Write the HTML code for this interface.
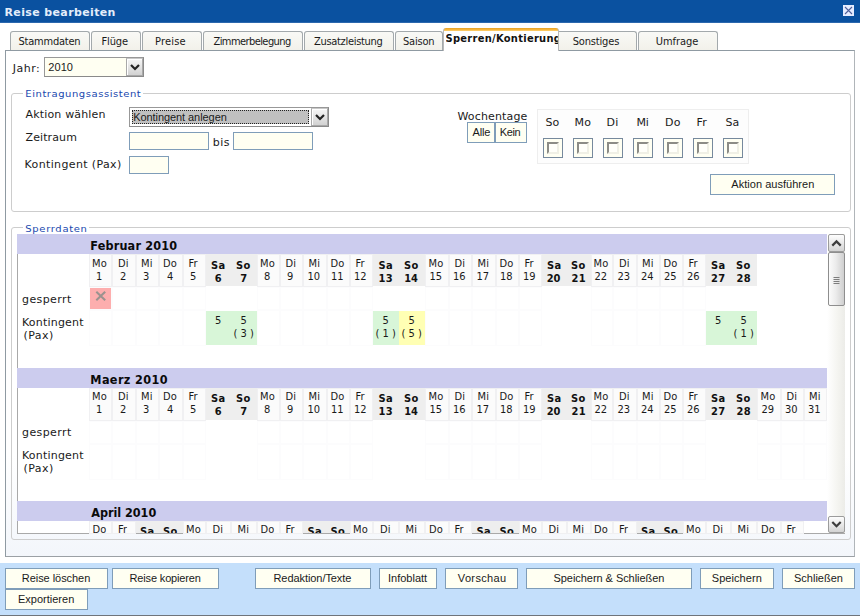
<!DOCTYPE html>
<html lang="de">
<head>
<meta charset="utf-8">
<title>Reise bearbeiten</title>
<style>
*{box-sizing:border-box;margin:0;padding:0}
html,body{width:860px;height:616px;overflow:hidden;background:#fff}
body{position:relative;font-family:"DejaVu Sans","Liberation Sans",sans-serif;font-size:11px;color:#1a1a1a}
.abs{position:absolute;white-space:nowrap}
.t{position:absolute;white-space:nowrap;line-height:13px;color:#1a1a1a}
.vd{font-family:"DejaVu Sans","Liberation Sans",sans-serif;font-size:11px}
.vs{font-family:"DejaVu Sans","Liberation Sans",sans-serif;font-size:10px;color:#2048ae;transform:scaleY(.9);transform-origin:0 9.4px}
.th{font-family:"DejaVu Sans Condensed","Liberation Sans",sans-serif;font-size:11px}
.ar{font-family:"Liberation Sans",sans-serif;font-size:11px}
.tt{font-family:"DejaVu Sans","Liberation Sans",sans-serif;font-size:11px;font-weight:bold;color:#e4edfa}
.mt{font-family:"DejaVu Sans Condensed","Liberation Sans",sans-serif;font-size:12.5px;font-weight:bold;color:#0a0a0a}
.tb{font-family:"DejaVu Sans Condensed","Liberation Sans",sans-serif;font-size:11px;font-weight:bold;color:#111}
#title{left:0;top:0;width:860px;height:23px;background:#0a51a0;border-bottom:1px solid #2b68ae}
#panel{left:5px;top:50px;width:850px;height:507px;border:1px solid #8f9aa2;border-right-color:#b0b5b9;border-bottom-color:#9ba0a5;background:linear-gradient(#fff 0,#fff 80%,#f3f6fb 100%)}
.tab{position:absolute;top:31px;height:19px;border:1px solid #a3a9ac;border-bottom:none;border-radius:3px 3px 0 0;background:linear-gradient(#f9f9f6,#f2f1ea)}
.tab.act{top:28px;height:23px;border:1px solid #b9b9b9;border-top:none;border-bottom:none;background:linear-gradient(#e8a123 0,#f6b53a 1.5px,#fdd173 3px,#fff 3px);z-index:3}
.inp{position:absolute;border:1px solid #7f9db9;background:#fffff2}
.btn{position:absolute;height:21px;border:1px solid #7f9db9;background:#fffff2}
.fs{position:absolute;border:1px solid #cdcdcd;border-radius:3px}
.lgbg{position:absolute;background:#fff;height:3px}
#bar{left:0;top:563px;width:860px;height:53px;background:#c4dffb;border-bottom:1px solid #6f747a}
.sel{position:absolute;border:1px solid #989898;border-right-color:#8a8a8a;border-bottom-color:#8a8a8a;background:#fffff2}
.sel .arr{position:absolute;right:0;top:0;bottom:0;width:17px;background:linear-gradient(#f6f6f6,#d2d2d2);border:1px solid #a9a9a9;border-top-color:#c8c8c8;box-shadow:inset 1px 1px 0 #fff}
.sel .arr svg{position:absolute;left:3px;top:5px}
.cb{position:absolute;width:20px;height:20px;border:1px solid #76899d;background:#fffff2}
.cb i{position:absolute;left:3px;top:3px;width:12px;height:12px;border:2px solid;border-color:#8c8c86 #f0f0e6 #f0f0e6 #8c8c86;background:#fffffa}
#cal{left:17px;top:234px;width:828px;height:300px;overflow:hidden;background:#fff;border-left:1px solid #a9a9a9;border-bottom:1px solid #a9a9a9}
.mh{position:absolute;left:0;width:810px;height:20px;background:#ccccee}
.dc{position:absolute;background:#fbfbfb;border:1px solid #f0f0f2}
.ec{position:absolute;border:1px solid #fcfcfd}
.dc.we{background:#eeeeee;border:none}
</style>
</head>
<body>
<div id="title" class="abs"></div>
<div class="t tt" style="left:4.5px;top:5.7px;letter-spacing:0.37px;">Reise bearbeiten</div>
<svg class="abs" style="left:843px;top:5px" width="11" height="11" viewBox="0 0 11 11"><rect width="11" height="11" fill="#e6ecff"/><path d="M2 2 L9 9 M9 2 L2 9" stroke="#50609a" stroke-width="1.1"/></svg>
<div id="panel" class="abs"></div>
<div class="tab" style="left:10px;width:80px"></div>
<div class="t th" style="left:18.5px;top:34.7px;letter-spacing:-0.22px;z-index:4">Stammdaten</div>
<div class="tab" style="left:91px;width:50px"></div>
<div class="t th" style="left:101.5px;top:34.7px;letter-spacing:-0.12px;z-index:4">Flüge</div>
<div class="tab" style="left:142px;width:60px"></div>
<div class="t th" style="left:155.0px;top:34.7px;letter-spacing:0.20px;z-index:4">Preise</div>
<div class="tab" style="left:203px;width:100px"></div>
<div class="t th" style="left:213.5px;top:34.7px;letter-spacing:-0.58px;z-index:4">Zimmerbelegung</div>
<div class="tab" style="left:304px;width:90px"></div>
<div class="t th" style="left:314.0px;top:34.7px;letter-spacing:-0.31px;z-index:4">Zusatzleistung</div>
<div class="tab" style="left:395px;width:48px"></div>
<div class="t th" style="left:403.0px;top:34.7px;letter-spacing:-0.20px;z-index:4">Saison</div>
<div class="tab act" style="left:443px;width:116px"></div>
<div class="t tb" style="left:445.5px;top:31.7px;letter-spacing:0.30px;z-index:4;overflow:hidden;width:112px">Sperren/Kontierung</div>
<div class="tab" style="left:554px;width:83px"></div>
<div class="t th" style="left:572.7px;top:34.7px;letter-spacing:-0.16px;z-index:4">Sonstiges</div>
<div class="tab" style="left:638px;width:80px"></div>
<div class="t th" style="left:655.7px;top:34.7px;letter-spacing:-0.03px;z-index:4">Umfrage</div>
<div class="t vd" style="left:12.8px;top:61.7px;letter-spacing:0.50px;">Jahr:</div>
<div class="sel" style="left:44px;top:57px;width:100px;height:20px"><div class="arr"><svg width="10" height="7" viewBox="0 0 10 7"><path d="M1 1 L5 5 L9 1" stroke="#222" stroke-width="2.2" fill="none"/></svg></div></div>
<div class="t ar" style="left:48.3px;top:60.7px;letter-spacing:0.07px;">2010</div>
<div class="fs" style="left:11px;top:93px;width:840px;height:119px"></div>
<div class="lgbg" style="left:23px;top:92px;width:120px"></div>
<div class="t vs" style="left:25.3px;top:87.4px;letter-spacing:0.55px;">Eintragungsassistent</div>
<div class="t vd" style="left:25.5px;top:107.5px;letter-spacing:0.17px;">Aktion wählen</div>
<div class="t vd" style="left:25.5px;top:131.2px;letter-spacing:0.11px;">Zeitraum</div>
<div class="t vd" style="left:24.5px;top:158.2px;letter-spacing:0.37px;">Kontingent (Pax)</div>
<div class="sel" style="left:129px;top:107px;width:200px;height:20px;background:#fff"><div class="abs" style="left:2px;top:2px;width:177px;height:14px;background:#c0c0c0;outline:1px dotted #222;outline-offset:-1px"></div><div class="arr"><svg width="10" height="7" viewBox="0 0 10 7"><path d="M1 1 L5 5 L9 1" stroke="#222" stroke-width="2.2" fill="none"/></svg></div></div>
<div class="t ar" style="left:133.2px;top:110.7px;letter-spacing:-0.07px;">Kontingent anlegen</div>
<div class="inp" style="left:129px;top:132px;width:80px;height:18px"></div>
<div class="t vd" style="left:212.8px;top:135.7px;letter-spacing:0.50px;">bis</div>
<div class="inp" style="left:233px;top:132px;width:80px;height:18px"></div>
<div class="inp" style="left:129px;top:156px;width:40px;height:18px"></div>
<div class="t vd" style="left:457.5px;top:109.7px;letter-spacing:0.14px;">Wochentage</div>
<div class="btn" style="left:467px;top:122px;width:28px;height:21px"></div>
<div class="btn" style="left:495px;top:122px;width:32px;height:21px"></div>
<div class="t ar" style="left:472.5px;top:125.5px;letter-spacing:-0.17px;">Alle</div>
<div class="t ar" style="left:499.8px;top:125.5px;letter-spacing:-0.43px;">Kein</div>
<div class="abs" style="left:537px;top:109px;width:212px;height:55px;border:1px solid #eeeeee;background:#fdfdfd"></div>
<div class="t vd" style="left:545.4px;top:116.0px;letter-spacing:0.25px;">So</div>
<div class="cb" style="left:543px;top:138px"><i></i></div>
<div class="t vd" style="left:574.5px;top:116.0px;letter-spacing:0.25px;">Mo</div>
<div class="cb" style="left:573px;top:138px"><i></i></div>
<div class="t vd" style="left:606.6px;top:116.0px;letter-spacing:0.25px;">Di</div>
<div class="cb" style="left:603px;top:138px"><i></i></div>
<div class="t vd" style="left:636.4px;top:116.0px;letter-spacing:-0.25px;">Mi</div>
<div class="cb" style="left:633px;top:138px"><i></i></div>
<div class="t vd" style="left:665.0px;top:116.0px;letter-spacing:0.25px;">Do</div>
<div class="cb" style="left:663px;top:138px"><i></i></div>
<div class="t vd" style="left:696.6px;top:116.0px;letter-spacing:0.25px;">Fr</div>
<div class="cb" style="left:693px;top:138px"><i></i></div>
<div class="t vd" style="left:725.4px;top:116.0px;letter-spacing:0.25px;">Sa</div>
<div class="cb" style="left:723px;top:138px"><i></i></div>
<div class="btn" style="left:710px;top:174px;width:125px;height:21px"></div>
<div class="t ar" style="left:731.3px;top:177.7px;letter-spacing:0.03px;">Aktion ausführen</div>
<div class="fs" style="left:11px;top:227px;width:840px;height:313px"></div>
<div class="lgbg" style="left:23px;top:226px;width:66px"></div>
<div class="t vs" style="left:25.3px;top:222.4px;letter-spacing:0.67px;">Sperrdaten</div>
<div id="cal" class="abs"></div>
<div class="mh abs" style="left:17px;top:234px"></div>
<div class="t mt" style="left:90.3px;top:239.4px;letter-spacing:0.18px;z-index:2">Februar 2010</div>
<div class="dc" style="left:89px;top:254px;width:23px;height:33px"></div>
<div class="ec" style="left:89px;top:287px;width:23px;height:23px"></div>
<div class="ec" style="left:89px;top:310px;width:23px;height:36px"></div>
<div class="t th" style="left:91.9px;top:256.7px;letter-spacing:0.25px;">Mo</div>
<div class="t th" style="left:96.0px;top:269.7px;letter-spacing:0.00px;">1</div>
<div class="dc" style="left:112px;top:254px;width:24px;height:33px"></div>
<div class="ec" style="left:112px;top:287px;width:24px;height:23px"></div>
<div class="ec" style="left:112px;top:310px;width:24px;height:36px"></div>
<div class="t th" style="left:117.9px;top:256.7px;letter-spacing:0.25px;">Di</div>
<div class="t th" style="left:120.0px;top:269.7px;letter-spacing:0.00px;">2</div>
<div class="dc" style="left:136px;top:254px;width:23px;height:33px"></div>
<div class="ec" style="left:136px;top:287px;width:23px;height:23px"></div>
<div class="ec" style="left:136px;top:310px;width:23px;height:36px"></div>
<div class="t th" style="left:140.9px;top:256.7px;letter-spacing:0.25px;">Mi</div>
<div class="t th" style="left:143.0px;top:269.7px;letter-spacing:0.00px;">3</div>
<div class="dc" style="left:159px;top:254px;width:24px;height:33px"></div>
<div class="ec" style="left:159px;top:287px;width:24px;height:23px"></div>
<div class="ec" style="left:159px;top:310px;width:24px;height:36px"></div>
<div class="t th" style="left:162.9px;top:256.7px;letter-spacing:0.25px;">Do</div>
<div class="t th" style="left:167.0px;top:269.7px;letter-spacing:0.00px;">4</div>
<div class="dc" style="left:183px;top:254px;width:23px;height:33px"></div>
<div class="ec" style="left:183px;top:287px;width:23px;height:23px"></div>
<div class="ec" style="left:183px;top:310px;width:23px;height:36px"></div>
<div class="t th" style="left:188.4px;top:256.7px;letter-spacing:0.25px;">Fr</div>
<div class="t th" style="left:190.0px;top:269.7px;letter-spacing:0.00px;">5</div>
<div class="dc we" style="left:206px;top:254px;width:25px;height:32px"></div>
<div class="t tb" style="left:211.1px;top:258.7px;letter-spacing:0.25px;">Sa</div>
<div class="t tb" style="left:214.7px;top:271.7px;letter-spacing:0.00px;">6</div>
<div class="dc we" style="left:231px;top:254px;width:26px;height:32px"></div>
<div class="t tb" style="left:236.1px;top:258.7px;letter-spacing:0.25px;">So</div>
<div class="t tb" style="left:240.2px;top:271.7px;letter-spacing:0.00px;">7</div>
<div class="dc" style="left:257px;top:254px;width:23px;height:33px"></div>
<div class="ec" style="left:257px;top:287px;width:23px;height:23px"></div>
<div class="ec" style="left:257px;top:310px;width:23px;height:36px"></div>
<div class="t th" style="left:259.9px;top:256.7px;letter-spacing:0.25px;">Mo</div>
<div class="t th" style="left:264.0px;top:269.7px;letter-spacing:0.00px;">8</div>
<div class="dc" style="left:280px;top:254px;width:23px;height:33px"></div>
<div class="ec" style="left:280px;top:287px;width:23px;height:23px"></div>
<div class="ec" style="left:280px;top:310px;width:23px;height:36px"></div>
<div class="t th" style="left:285.4px;top:256.7px;letter-spacing:0.25px;">Di</div>
<div class="t th" style="left:287.0px;top:269.7px;letter-spacing:0.00px;">9</div>
<div class="dc" style="left:303px;top:254px;width:24px;height:33px"></div>
<div class="ec" style="left:303px;top:287px;width:24px;height:23px"></div>
<div class="ec" style="left:303px;top:310px;width:24px;height:36px"></div>
<div class="t th" style="left:308.4px;top:256.7px;letter-spacing:0.25px;">Mi</div>
<div class="t th" style="left:307.6px;top:269.7px;letter-spacing:-0.20px;">10</div>
<div class="dc" style="left:327px;top:254px;width:23px;height:33px"></div>
<div class="ec" style="left:327px;top:287px;width:23px;height:23px"></div>
<div class="ec" style="left:327px;top:310px;width:23px;height:36px"></div>
<div class="t th" style="left:330.4px;top:256.7px;letter-spacing:0.25px;">Do</div>
<div class="t th" style="left:331.1px;top:269.7px;letter-spacing:-0.20px;">11</div>
<div class="dc" style="left:350px;top:254px;width:23px;height:33px"></div>
<div class="ec" style="left:350px;top:287px;width:23px;height:23px"></div>
<div class="ec" style="left:350px;top:310px;width:23px;height:36px"></div>
<div class="t th" style="left:355.4px;top:256.7px;letter-spacing:0.25px;">Fr</div>
<div class="t th" style="left:354.1px;top:269.7px;letter-spacing:-0.20px;">12</div>
<div class="dc we" style="left:373px;top:254px;width:26px;height:32px"></div>
<div class="t tb" style="left:378.6px;top:258.7px;letter-spacing:0.25px;">Sa</div>
<div class="t tb" style="left:378.6px;top:271.7px;letter-spacing:0.25px;">13</div>
<div class="dc we" style="left:399px;top:254px;width:26px;height:32px"></div>
<div class="t tb" style="left:404.1px;top:258.7px;letter-spacing:0.25px;">So</div>
<div class="t tb" style="left:404.2px;top:271.7px;letter-spacing:0.00px;">14</div>
<div class="dc" style="left:425px;top:254px;width:24px;height:33px"></div>
<div class="ec" style="left:425px;top:287px;width:24px;height:23px"></div>
<div class="ec" style="left:425px;top:310px;width:24px;height:36px"></div>
<div class="t th" style="left:428.4px;top:256.7px;letter-spacing:0.25px;">Mo</div>
<div class="t th" style="left:429.6px;top:269.7px;letter-spacing:-0.20px;">15</div>
<div class="dc" style="left:449px;top:254px;width:23px;height:33px"></div>
<div class="ec" style="left:449px;top:287px;width:23px;height:23px"></div>
<div class="ec" style="left:449px;top:310px;width:23px;height:36px"></div>
<div class="t th" style="left:454.4px;top:256.7px;letter-spacing:0.25px;">Di</div>
<div class="t th" style="left:453.1px;top:269.7px;letter-spacing:-0.20px;">16</div>
<div class="dc" style="left:472px;top:254px;width:24px;height:33px"></div>
<div class="ec" style="left:472px;top:287px;width:24px;height:23px"></div>
<div class="ec" style="left:472px;top:310px;width:24px;height:36px"></div>
<div class="t th" style="left:477.4px;top:256.7px;letter-spacing:0.25px;">Mi</div>
<div class="t th" style="left:476.6px;top:269.7px;letter-spacing:-0.20px;">17</div>
<div class="dc" style="left:496px;top:254px;width:23px;height:33px"></div>
<div class="ec" style="left:496px;top:287px;width:23px;height:23px"></div>
<div class="ec" style="left:496px;top:310px;width:23px;height:36px"></div>
<div class="t th" style="left:499.4px;top:256.7px;letter-spacing:0.25px;">Do</div>
<div class="t th" style="left:500.1px;top:269.7px;letter-spacing:-0.20px;">18</div>
<div class="dc" style="left:519px;top:254px;width:23px;height:33px"></div>
<div class="ec" style="left:519px;top:287px;width:23px;height:23px"></div>
<div class="ec" style="left:519px;top:310px;width:23px;height:36px"></div>
<div class="t th" style="left:524.4px;top:256.7px;letter-spacing:0.25px;">Fr</div>
<div class="t th" style="left:523.1px;top:269.7px;letter-spacing:-0.20px;">19</div>
<div class="dc we" style="left:542px;top:254px;width:25px;height:32px"></div>
<div class="t tb" style="left:547.1px;top:258.7px;letter-spacing:0.25px;">Sa</div>
<div class="t tb" style="left:546.7px;top:271.7px;letter-spacing:0.00px;">20</div>
<div class="dc we" style="left:567px;top:254px;width:24px;height:32px"></div>
<div class="t tb" style="left:571.1px;top:258.7px;letter-spacing:0.25px;">So</div>
<div class="t tb" style="left:571.6px;top:271.7px;letter-spacing:0.25px;">21</div>
<div class="dc" style="left:591px;top:254px;width:22px;height:33px"></div>
<div class="ec" style="left:591px;top:287px;width:22px;height:23px"></div>
<div class="ec" style="left:591px;top:310px;width:22px;height:36px"></div>
<div class="t th" style="left:593.4px;top:256.7px;letter-spacing:0.25px;">Mo</div>
<div class="t th" style="left:594.6px;top:269.7px;letter-spacing:-0.20px;">22</div>
<div class="dc" style="left:613px;top:254px;width:24px;height:33px"></div>
<div class="ec" style="left:613px;top:287px;width:24px;height:23px"></div>
<div class="ec" style="left:613px;top:310px;width:24px;height:36px"></div>
<div class="t th" style="left:618.9px;top:256.7px;letter-spacing:0.25px;">Di</div>
<div class="t th" style="left:617.6px;top:269.7px;letter-spacing:-0.20px;">23</div>
<div class="dc" style="left:637px;top:254px;width:23px;height:33px"></div>
<div class="ec" style="left:637px;top:287px;width:23px;height:23px"></div>
<div class="ec" style="left:637px;top:310px;width:23px;height:36px"></div>
<div class="t th" style="left:641.9px;top:256.7px;letter-spacing:0.25px;">Mi</div>
<div class="t th" style="left:641.1px;top:269.7px;letter-spacing:-0.20px;">24</div>
<div class="dc" style="left:660px;top:254px;width:23px;height:33px"></div>
<div class="ec" style="left:660px;top:287px;width:23px;height:23px"></div>
<div class="ec" style="left:660px;top:310px;width:23px;height:36px"></div>
<div class="t th" style="left:663.4px;top:256.7px;letter-spacing:0.25px;">Do</div>
<div class="t th" style="left:664.1px;top:269.7px;letter-spacing:-0.20px;">25</div>
<div class="dc" style="left:683px;top:254px;width:23px;height:33px"></div>
<div class="ec" style="left:683px;top:287px;width:23px;height:23px"></div>
<div class="ec" style="left:683px;top:310px;width:23px;height:36px"></div>
<div class="t th" style="left:688.4px;top:256.7px;letter-spacing:0.25px;">Fr</div>
<div class="t th" style="left:687.1px;top:269.7px;letter-spacing:-0.20px;">26</div>
<div class="dc we" style="left:706px;top:254px;width:25px;height:32px"></div>
<div class="t tb" style="left:711.1px;top:258.7px;letter-spacing:0.25px;">Sa</div>
<div class="t tb" style="left:711.1px;top:271.7px;letter-spacing:0.25px;">27</div>
<div class="dc we" style="left:731px;top:254px;width:26px;height:32px"></div>
<div class="t tb" style="left:736.1px;top:258.7px;letter-spacing:0.25px;">So</div>
<div class="t tb" style="left:736.6px;top:271.7px;letter-spacing:0.25px;">28</div>
<div class="t vd" style="left:22.0px;top:292.7px;letter-spacing:0.40px;">gesperrt</div>
<div class="t vd" style="left:22.0px;top:315.7px;letter-spacing:0.20px;">Kontingent</div>
<div class="t vd" style="left:23.4px;top:328.7px;letter-spacing:0.50px;">(Pax)</div>
<div class="abs" style="left:90px;top:288px;width:21px;height:21px;background:#fdaeae"><svg width="21" height="21" viewBox="0 0 21 21"><path d="M6.3 3.8 L15.2 12.2 M15.2 3.8 L6.3 12.2" stroke="#9a938f" stroke-width="2.1" fill="none"/></svg></div>
<div class="abs" style="left:206px;top:311px;width:25px;height:34px;background:#d8f6d8"></div>
<div class="t th" style="left:215.0px;top:313.7px;letter-spacing:0.00px;">5</div>
<div class="abs" style="left:231px;top:311px;width:26px;height:34px;background:#d8f6d8"></div>
<div class="t th" style="left:240.5px;top:313.7px;letter-spacing:0.00px;">5</div>
<div class="t th" style="left:233.5px;top:326.7px;letter-spacing:0.00px;">( 3 )</div>
<div class="abs" style="left:373px;top:311px;width:26px;height:34px;background:#d8f6d8"></div>
<div class="t th" style="left:382.5px;top:313.7px;letter-spacing:0.00px;">5</div>
<div class="t th" style="left:375.5px;top:326.7px;letter-spacing:0.00px;">( 1 )</div>
<div class="abs" style="left:399px;top:311px;width:26px;height:34px;background:#ffffb4"></div>
<div class="t th" style="left:408.5px;top:313.7px;letter-spacing:0.00px;">5</div>
<div class="t th" style="left:401.5px;top:326.7px;letter-spacing:0.00px;">( 5 )</div>
<div class="abs" style="left:706px;top:311px;width:25px;height:34px;background:#d8f6d8"></div>
<div class="t th" style="left:715.0px;top:313.7px;letter-spacing:0.00px;">5</div>
<div class="abs" style="left:731px;top:311px;width:26px;height:34px;background:#d8f6d8"></div>
<div class="t th" style="left:740.5px;top:313.7px;letter-spacing:0.00px;">5</div>
<div class="t th" style="left:733.5px;top:326.7px;letter-spacing:0.00px;">( 1 )</div>
<div class="mh abs" style="left:17px;top:368px"></div>
<div class="t mt" style="left:90.3px;top:372.6px;letter-spacing:0.39px;z-index:2">Maerz 2010</div>
<div class="dc" style="left:89px;top:388px;width:23px;height:33px"></div>
<div class="ec" style="left:89px;top:421px;width:23px;height:23px"></div>
<div class="ec" style="left:89px;top:444px;width:23px;height:36px"></div>
<div class="t th" style="left:91.9px;top:389.9px;letter-spacing:0.25px;">Mo</div>
<div class="t th" style="left:96.0px;top:402.9px;letter-spacing:0.00px;">1</div>
<div class="dc" style="left:112px;top:388px;width:24px;height:33px"></div>
<div class="ec" style="left:112px;top:421px;width:24px;height:23px"></div>
<div class="ec" style="left:112px;top:444px;width:24px;height:36px"></div>
<div class="t th" style="left:117.9px;top:389.9px;letter-spacing:0.25px;">Di</div>
<div class="t th" style="left:120.0px;top:402.9px;letter-spacing:0.00px;">2</div>
<div class="dc" style="left:136px;top:388px;width:23px;height:33px"></div>
<div class="ec" style="left:136px;top:421px;width:23px;height:23px"></div>
<div class="ec" style="left:136px;top:444px;width:23px;height:36px"></div>
<div class="t th" style="left:140.9px;top:389.9px;letter-spacing:0.25px;">Mi</div>
<div class="t th" style="left:143.0px;top:402.9px;letter-spacing:0.00px;">3</div>
<div class="dc" style="left:159px;top:388px;width:24px;height:33px"></div>
<div class="ec" style="left:159px;top:421px;width:24px;height:23px"></div>
<div class="ec" style="left:159px;top:444px;width:24px;height:36px"></div>
<div class="t th" style="left:162.9px;top:389.9px;letter-spacing:0.25px;">Do</div>
<div class="t th" style="left:167.0px;top:402.9px;letter-spacing:0.00px;">4</div>
<div class="dc" style="left:183px;top:388px;width:23px;height:33px"></div>
<div class="ec" style="left:183px;top:421px;width:23px;height:23px"></div>
<div class="ec" style="left:183px;top:444px;width:23px;height:36px"></div>
<div class="t th" style="left:188.4px;top:389.9px;letter-spacing:0.25px;">Fr</div>
<div class="t th" style="left:190.0px;top:402.9px;letter-spacing:0.00px;">5</div>
<div class="dc we" style="left:206px;top:388px;width:25px;height:32px"></div>
<div class="t tb" style="left:211.1px;top:391.9px;letter-spacing:0.25px;">Sa</div>
<div class="t tb" style="left:214.7px;top:404.9px;letter-spacing:0.00px;">6</div>
<div class="dc we" style="left:231px;top:388px;width:26px;height:32px"></div>
<div class="t tb" style="left:236.1px;top:391.9px;letter-spacing:0.25px;">So</div>
<div class="t tb" style="left:240.2px;top:404.9px;letter-spacing:0.00px;">7</div>
<div class="dc" style="left:257px;top:388px;width:23px;height:33px"></div>
<div class="ec" style="left:257px;top:421px;width:23px;height:23px"></div>
<div class="ec" style="left:257px;top:444px;width:23px;height:36px"></div>
<div class="t th" style="left:259.9px;top:389.9px;letter-spacing:0.25px;">Mo</div>
<div class="t th" style="left:264.0px;top:402.9px;letter-spacing:0.00px;">8</div>
<div class="dc" style="left:280px;top:388px;width:23px;height:33px"></div>
<div class="ec" style="left:280px;top:421px;width:23px;height:23px"></div>
<div class="ec" style="left:280px;top:444px;width:23px;height:36px"></div>
<div class="t th" style="left:285.4px;top:389.9px;letter-spacing:0.25px;">Di</div>
<div class="t th" style="left:287.0px;top:402.9px;letter-spacing:0.00px;">9</div>
<div class="dc" style="left:303px;top:388px;width:24px;height:33px"></div>
<div class="ec" style="left:303px;top:421px;width:24px;height:23px"></div>
<div class="ec" style="left:303px;top:444px;width:24px;height:36px"></div>
<div class="t th" style="left:308.4px;top:389.9px;letter-spacing:0.25px;">Mi</div>
<div class="t th" style="left:307.6px;top:402.9px;letter-spacing:-0.20px;">10</div>
<div class="dc" style="left:327px;top:388px;width:23px;height:33px"></div>
<div class="ec" style="left:327px;top:421px;width:23px;height:23px"></div>
<div class="ec" style="left:327px;top:444px;width:23px;height:36px"></div>
<div class="t th" style="left:330.4px;top:389.9px;letter-spacing:0.25px;">Do</div>
<div class="t th" style="left:331.1px;top:402.9px;letter-spacing:-0.20px;">11</div>
<div class="dc" style="left:350px;top:388px;width:23px;height:33px"></div>
<div class="ec" style="left:350px;top:421px;width:23px;height:23px"></div>
<div class="ec" style="left:350px;top:444px;width:23px;height:36px"></div>
<div class="t th" style="left:355.4px;top:389.9px;letter-spacing:0.25px;">Fr</div>
<div class="t th" style="left:354.1px;top:402.9px;letter-spacing:-0.20px;">12</div>
<div class="dc we" style="left:373px;top:388px;width:26px;height:32px"></div>
<div class="t tb" style="left:378.6px;top:391.9px;letter-spacing:0.25px;">Sa</div>
<div class="t tb" style="left:378.6px;top:404.9px;letter-spacing:0.25px;">13</div>
<div class="dc we" style="left:399px;top:388px;width:26px;height:32px"></div>
<div class="t tb" style="left:404.1px;top:391.9px;letter-spacing:0.25px;">So</div>
<div class="t tb" style="left:404.2px;top:404.9px;letter-spacing:0.00px;">14</div>
<div class="dc" style="left:425px;top:388px;width:24px;height:33px"></div>
<div class="ec" style="left:425px;top:421px;width:24px;height:23px"></div>
<div class="ec" style="left:425px;top:444px;width:24px;height:36px"></div>
<div class="t th" style="left:428.4px;top:389.9px;letter-spacing:0.25px;">Mo</div>
<div class="t th" style="left:429.6px;top:402.9px;letter-spacing:-0.20px;">15</div>
<div class="dc" style="left:449px;top:388px;width:23px;height:33px"></div>
<div class="ec" style="left:449px;top:421px;width:23px;height:23px"></div>
<div class="ec" style="left:449px;top:444px;width:23px;height:36px"></div>
<div class="t th" style="left:454.4px;top:389.9px;letter-spacing:0.25px;">Di</div>
<div class="t th" style="left:453.1px;top:402.9px;letter-spacing:-0.20px;">16</div>
<div class="dc" style="left:472px;top:388px;width:24px;height:33px"></div>
<div class="ec" style="left:472px;top:421px;width:24px;height:23px"></div>
<div class="ec" style="left:472px;top:444px;width:24px;height:36px"></div>
<div class="t th" style="left:477.4px;top:389.9px;letter-spacing:0.25px;">Mi</div>
<div class="t th" style="left:476.6px;top:402.9px;letter-spacing:-0.20px;">17</div>
<div class="dc" style="left:496px;top:388px;width:23px;height:33px"></div>
<div class="ec" style="left:496px;top:421px;width:23px;height:23px"></div>
<div class="ec" style="left:496px;top:444px;width:23px;height:36px"></div>
<div class="t th" style="left:499.4px;top:389.9px;letter-spacing:0.25px;">Do</div>
<div class="t th" style="left:500.1px;top:402.9px;letter-spacing:-0.20px;">18</div>
<div class="dc" style="left:519px;top:388px;width:23px;height:33px"></div>
<div class="ec" style="left:519px;top:421px;width:23px;height:23px"></div>
<div class="ec" style="left:519px;top:444px;width:23px;height:36px"></div>
<div class="t th" style="left:524.4px;top:389.9px;letter-spacing:0.25px;">Fr</div>
<div class="t th" style="left:523.1px;top:402.9px;letter-spacing:-0.20px;">19</div>
<div class="dc we" style="left:542px;top:388px;width:25px;height:32px"></div>
<div class="t tb" style="left:547.1px;top:391.9px;letter-spacing:0.25px;">Sa</div>
<div class="t tb" style="left:546.7px;top:404.9px;letter-spacing:0.00px;">20</div>
<div class="dc we" style="left:567px;top:388px;width:24px;height:32px"></div>
<div class="t tb" style="left:571.1px;top:391.9px;letter-spacing:0.25px;">So</div>
<div class="t tb" style="left:571.6px;top:404.9px;letter-spacing:0.25px;">21</div>
<div class="dc" style="left:591px;top:388px;width:22px;height:33px"></div>
<div class="ec" style="left:591px;top:421px;width:22px;height:23px"></div>
<div class="ec" style="left:591px;top:444px;width:22px;height:36px"></div>
<div class="t th" style="left:593.4px;top:389.9px;letter-spacing:0.25px;">Mo</div>
<div class="t th" style="left:594.6px;top:402.9px;letter-spacing:-0.20px;">22</div>
<div class="dc" style="left:613px;top:388px;width:24px;height:33px"></div>
<div class="ec" style="left:613px;top:421px;width:24px;height:23px"></div>
<div class="ec" style="left:613px;top:444px;width:24px;height:36px"></div>
<div class="t th" style="left:618.9px;top:389.9px;letter-spacing:0.25px;">Di</div>
<div class="t th" style="left:617.6px;top:402.9px;letter-spacing:-0.20px;">23</div>
<div class="dc" style="left:637px;top:388px;width:23px;height:33px"></div>
<div class="ec" style="left:637px;top:421px;width:23px;height:23px"></div>
<div class="ec" style="left:637px;top:444px;width:23px;height:36px"></div>
<div class="t th" style="left:641.9px;top:389.9px;letter-spacing:0.25px;">Mi</div>
<div class="t th" style="left:641.1px;top:402.9px;letter-spacing:-0.20px;">24</div>
<div class="dc" style="left:660px;top:388px;width:23px;height:33px"></div>
<div class="ec" style="left:660px;top:421px;width:23px;height:23px"></div>
<div class="ec" style="left:660px;top:444px;width:23px;height:36px"></div>
<div class="t th" style="left:663.4px;top:389.9px;letter-spacing:0.25px;">Do</div>
<div class="t th" style="left:664.1px;top:402.9px;letter-spacing:-0.20px;">25</div>
<div class="dc" style="left:683px;top:388px;width:23px;height:33px"></div>
<div class="ec" style="left:683px;top:421px;width:23px;height:23px"></div>
<div class="ec" style="left:683px;top:444px;width:23px;height:36px"></div>
<div class="t th" style="left:688.4px;top:389.9px;letter-spacing:0.25px;">Fr</div>
<div class="t th" style="left:687.1px;top:402.9px;letter-spacing:-0.20px;">26</div>
<div class="dc we" style="left:706px;top:388px;width:25px;height:32px"></div>
<div class="t tb" style="left:711.1px;top:391.9px;letter-spacing:0.25px;">Sa</div>
<div class="t tb" style="left:711.1px;top:404.9px;letter-spacing:0.25px;">27</div>
<div class="dc we" style="left:731px;top:388px;width:26px;height:32px"></div>
<div class="t tb" style="left:736.1px;top:391.9px;letter-spacing:0.25px;">So</div>
<div class="t tb" style="left:736.6px;top:404.9px;letter-spacing:0.25px;">28</div>
<div class="dc" style="left:757px;top:388px;width:24px;height:33px"></div>
<div class="ec" style="left:757px;top:421px;width:24px;height:23px"></div>
<div class="ec" style="left:757px;top:444px;width:24px;height:36px"></div>
<div class="t th" style="left:760.4px;top:389.9px;letter-spacing:0.25px;">Mo</div>
<div class="t th" style="left:761.6px;top:402.9px;letter-spacing:-0.20px;">29</div>
<div class="dc" style="left:781px;top:388px;width:23px;height:33px"></div>
<div class="ec" style="left:781px;top:421px;width:23px;height:23px"></div>
<div class="ec" style="left:781px;top:444px;width:23px;height:36px"></div>
<div class="t th" style="left:786.4px;top:389.9px;letter-spacing:0.25px;">Di</div>
<div class="t th" style="left:785.1px;top:402.9px;letter-spacing:-0.20px;">30</div>
<div class="dc" style="left:804px;top:388px;width:23px;height:33px"></div>
<div class="ec" style="left:804px;top:421px;width:23px;height:23px"></div>
<div class="ec" style="left:804px;top:444px;width:23px;height:36px"></div>
<div class="t th" style="left:808.9px;top:389.9px;letter-spacing:0.25px;">Mi</div>
<div class="t th" style="left:808.1px;top:402.9px;letter-spacing:-0.20px;">31</div>
<div class="t vd" style="left:22.0px;top:425.9px;letter-spacing:0.40px;">gesperrt</div>
<div class="t vd" style="left:22.0px;top:448.9px;letter-spacing:0.20px;">Kontingent</div>
<div class="t vd" style="left:23.4px;top:461.9px;letter-spacing:0.50px;">(Pax)</div>
<div class="mh abs" style="left:17px;top:501px"></div>
<div class="t mt" style="left:91.3px;top:505.6px;letter-spacing:-0.03px;z-index:2">April 2010</div>
<div class="dc" style="left:89px;top:521px;width:23px;height:13px"></div>
<div class="t th" style="left:92.4px;top:522.9px;letter-spacing:0.25px;clip-path:inset(0 0 2.9px 0)">Do</div>
<div class="dc" style="left:112px;top:521px;width:24px;height:13px"></div>
<div class="t th" style="left:117.9px;top:522.9px;letter-spacing:0.25px;clip-path:inset(0 0 2.9px 0)">Fr</div>
<div class="dc we" style="left:136px;top:521px;width:23px;height:12px"></div>
<div class="t tb" style="left:140.1px;top:524.9px;letter-spacing:0.25px;clip-path:inset(0 0 4.9px 0)">Sa</div>
<div class="dc we" style="left:159px;top:521px;width:24px;height:12px"></div>
<div class="t tb" style="left:163.1px;top:524.9px;letter-spacing:0.25px;clip-path:inset(0 0 4.9px 0)">So</div>
<div class="dc" style="left:183px;top:521px;width:23px;height:13px"></div>
<div class="t th" style="left:185.9px;top:522.9px;letter-spacing:0.25px;clip-path:inset(0 0 2.9px 0)">Mo</div>
<div class="dc" style="left:206px;top:521px;width:25px;height:13px"></div>
<div class="t th" style="left:212.4px;top:522.9px;letter-spacing:0.25px;clip-path:inset(0 0 2.9px 0)">Di</div>
<div class="dc" style="left:231px;top:521px;width:26px;height:13px"></div>
<div class="t th" style="left:237.4px;top:522.9px;letter-spacing:0.25px;clip-path:inset(0 0 2.9px 0)">Mi</div>
<div class="dc" style="left:257px;top:521px;width:23px;height:13px"></div>
<div class="t th" style="left:260.4px;top:522.9px;letter-spacing:0.25px;clip-path:inset(0 0 2.9px 0)">Do</div>
<div class="dc" style="left:280px;top:521px;width:23px;height:13px"></div>
<div class="t th" style="left:285.4px;top:522.9px;letter-spacing:0.25px;clip-path:inset(0 0 2.9px 0)">Fr</div>
<div class="dc we" style="left:303px;top:521px;width:24px;height:12px"></div>
<div class="t tb" style="left:307.6px;top:524.9px;letter-spacing:0.25px;clip-path:inset(0 0 4.9px 0)">Sa</div>
<div class="dc we" style="left:327px;top:521px;width:23px;height:12px"></div>
<div class="t tb" style="left:330.6px;top:524.9px;letter-spacing:0.25px;clip-path:inset(0 0 4.9px 0)">So</div>
<div class="dc" style="left:350px;top:521px;width:23px;height:13px"></div>
<div class="t th" style="left:352.9px;top:522.9px;letter-spacing:0.25px;clip-path:inset(0 0 2.9px 0)">Mo</div>
<div class="dc" style="left:373px;top:521px;width:26px;height:13px"></div>
<div class="t th" style="left:379.9px;top:522.9px;letter-spacing:0.25px;clip-path:inset(0 0 2.9px 0)">Di</div>
<div class="dc" style="left:399px;top:521px;width:26px;height:13px"></div>
<div class="t th" style="left:405.4px;top:522.9px;letter-spacing:0.25px;clip-path:inset(0 0 2.9px 0)">Mi</div>
<div class="dc" style="left:425px;top:521px;width:24px;height:13px"></div>
<div class="t th" style="left:428.9px;top:522.9px;letter-spacing:0.25px;clip-path:inset(0 0 2.9px 0)">Do</div>
<div class="dc" style="left:449px;top:521px;width:23px;height:13px"></div>
<div class="t th" style="left:454.4px;top:522.9px;letter-spacing:0.25px;clip-path:inset(0 0 2.9px 0)">Fr</div>
<div class="dc we" style="left:472px;top:521px;width:24px;height:12px"></div>
<div class="t tb" style="left:476.6px;top:524.9px;letter-spacing:0.25px;clip-path:inset(0 0 4.9px 0)">Sa</div>
<div class="dc we" style="left:496px;top:521px;width:23px;height:12px"></div>
<div class="t tb" style="left:499.6px;top:524.9px;letter-spacing:0.25px;clip-path:inset(0 0 4.9px 0)">So</div>
<div class="dc" style="left:519px;top:521px;width:23px;height:13px"></div>
<div class="t th" style="left:521.9px;top:522.9px;letter-spacing:0.25px;clip-path:inset(0 0 2.9px 0)">Mo</div>
<div class="dc" style="left:542px;top:521px;width:25px;height:13px"></div>
<div class="t th" style="left:548.4px;top:522.9px;letter-spacing:0.25px;clip-path:inset(0 0 2.9px 0)">Di</div>
<div class="dc" style="left:567px;top:521px;width:24px;height:13px"></div>
<div class="t th" style="left:572.4px;top:522.9px;letter-spacing:0.25px;clip-path:inset(0 0 2.9px 0)">Mi</div>
<div class="dc" style="left:591px;top:521px;width:22px;height:13px"></div>
<div class="t th" style="left:593.9px;top:522.9px;letter-spacing:0.25px;clip-path:inset(0 0 2.9px 0)">Do</div>
<div class="dc" style="left:613px;top:521px;width:24px;height:13px"></div>
<div class="t th" style="left:618.9px;top:522.9px;letter-spacing:0.25px;clip-path:inset(0 0 2.9px 0)">Fr</div>
<div class="dc we" style="left:637px;top:521px;width:23px;height:12px"></div>
<div class="t tb" style="left:641.1px;top:524.9px;letter-spacing:0.25px;clip-path:inset(0 0 4.9px 0)">Sa</div>
<div class="dc we" style="left:660px;top:521px;width:23px;height:12px"></div>
<div class="t tb" style="left:663.6px;top:524.9px;letter-spacing:0.25px;clip-path:inset(0 0 4.9px 0)">So</div>
<div class="dc" style="left:683px;top:521px;width:23px;height:13px"></div>
<div class="t th" style="left:685.9px;top:522.9px;letter-spacing:0.25px;clip-path:inset(0 0 2.9px 0)">Mo</div>
<div class="dc" style="left:706px;top:521px;width:25px;height:13px"></div>
<div class="t th" style="left:712.4px;top:522.9px;letter-spacing:0.25px;clip-path:inset(0 0 2.9px 0)">Di</div>
<div class="dc" style="left:731px;top:521px;width:26px;height:13px"></div>
<div class="t th" style="left:737.4px;top:522.9px;letter-spacing:0.25px;clip-path:inset(0 0 2.9px 0)">Mi</div>
<div class="dc" style="left:757px;top:521px;width:24px;height:13px"></div>
<div class="t th" style="left:760.9px;top:522.9px;letter-spacing:0.25px;clip-path:inset(0 0 2.9px 0)">Do</div>
<div class="dc" style="left:781px;top:521px;width:23px;height:13px"></div>
<div class="t th" style="left:786.4px;top:522.9px;letter-spacing:0.25px;clip-path:inset(0 0 2.9px 0)">Fr</div>
<div class="abs" style="left:827px;top:234px;width:18px;height:299px;background:linear-gradient(90deg,#ffffff,#f4f4f0 60%,#ecece8)"></div>
<div class="abs" style="left:828px;top:234px;width:17px;height:18px;border:1px solid #9c9c9c;border-radius:2px;background:linear-gradient(#fdfdfd,#e9e9e9 50%,#d3d3d3)"><svg width="15" height="16" viewBox="0 0 15 16"><path d="M3.3 10.6 L7.5 6.4 L11.7 10.6" stroke="#3c3c3c" stroke-width="2.2" fill="none"/></svg></div>
<div class="abs" style="left:828px;top:252px;width:17px;height:54px;border:1px solid #8e8e8e;border-radius:2px;background:linear-gradient(90deg,#fbfbfb,#ececec 45%,#cfcfcf)"><svg width="15" height="52" viewBox="0 0 15 52"><path d="M4.5 24.5H10.5M4.5 26.5H10.5M4.5 28.5H10.5M4.5 30.5H10.5" stroke="#7d7d7d" stroke-width="1"/></svg></div>
<div class="abs" style="left:828px;top:516px;width:17px;height:17px;border:1px solid #9c9c9c;border-radius:2px;background:linear-gradient(#fdfdfd,#e9e9e9 50%,#d3d3d3)"><svg width="15" height="15" viewBox="0 0 15 15"><path d="M3.3 5 L7.5 9.2 L11.7 5" stroke="#3c3c3c" stroke-width="2.2" fill="none"/></svg></div>
<div id="bar" class="abs"></div>
<div class="btn" style="left:5px;top:568px;width:103px"></div>
<div class="t ar" style="left:21.8px;top:571.7px;letter-spacing:-0.05px;">Reise löschen</div>
<div class="btn" style="left:112px;top:568px;width:107px"></div>
<div class="t ar" style="left:129.5px;top:571.7px;letter-spacing:-0.15px;">Reise kopieren</div>
<div class="btn" style="left:255px;top:568px;width:116px"></div>
<div class="t ar" style="left:273.5px;top:571.7px;letter-spacing:-0.07px;">Redaktion/Texte</div>
<div class="btn" style="left:379px;top:568px;width:58px"></div>
<div class="t ar" style="left:388.0px;top:571.7px;letter-spacing:0.00px;">Infoblatt</div>
<div class="btn" style="left:445px;top:568px;width:73px"></div>
<div class="t ar" style="left:457.8px;top:571.7px;letter-spacing:0.36px;">Vorschau</div>
<div class="btn" style="left:526px;top:568px;width:166px"></div>
<div class="t ar" style="left:553.5px;top:571.7px;letter-spacing:-0.05px;">Speichern &amp; Schließen</div>
<div class="btn" style="left:700px;top:568px;width:74px"></div>
<div class="t ar" style="left:711.8px;top:571.7px;letter-spacing:0.06px;">Speichern</div>
<div class="btn" style="left:782px;top:568px;width:73px"></div>
<div class="t ar" style="left:794.0px;top:571.7px;letter-spacing:0.00px;">Schließen</div>
<div class="btn" style="left:5px;top:589px;width:83px"></div>
<div class="t ar" style="left:18.0px;top:592.7px;letter-spacing:0.00px;">Exportieren</div>
</body>
</html>
